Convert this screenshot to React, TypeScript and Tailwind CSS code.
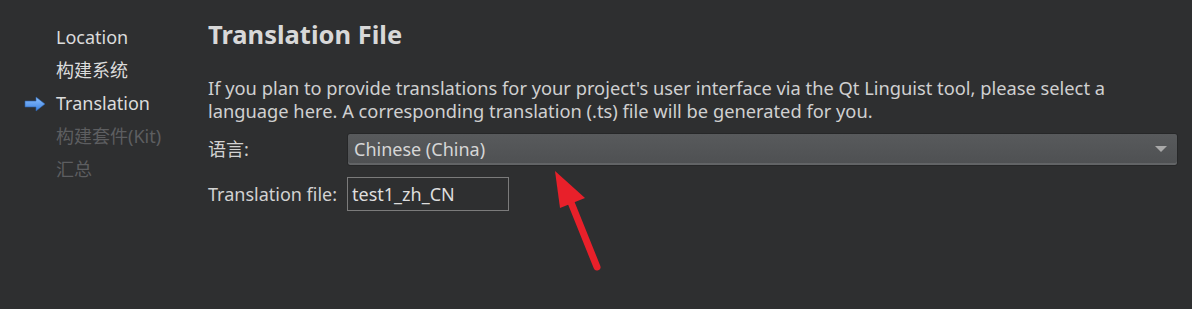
import React from "react";

const font = { fontFamily: '"Noto Sans", "Noto Sans CJK SC", sans-serif' };

const steps = [
  { name: "Location", state: "done" },
  { name: "构建系统", state: "done" },
  { name: "Translation", state: "current" },
  { name: "构建套件(Kit)", state: "todo" },
  { name: "汇总", state: "todo" },
];

function BlueArrow() {
  return (
    <svg width="22" height="16" viewBox="0 0 22 16">
      <defs>
        <linearGradient id="ba" x1="0" y1="0" x2="0" y2="1">
          <stop offset="0" stopColor="#8cc0ff" />
          <stop offset="1" stopColor="#3d82e0" />
        </linearGradient>
      </defs>
      <path d="M1 5 H12 V1 L21 8 L12 15 V11 H1 Z" fill="url(#ba)" stroke="#2a5fa8" strokeWidth="0.6" />
    </svg>
  );
}

export default function App() {
  return (
    <div className="w-[1192px] h-[309px] bg-[#2e2f30] flex text-[18px] text-[#d2d2d2] relative overflow-hidden" style={font}>
      <div className="w-[208px] pt-[21px] flex flex-col">
        {steps.map((s) => (
          <div key={s.name} className="h-[33px] flex items-center">
            <div className="w-[56px] flex justify-end pr-[10px]">{s.state === "current" && <BlueArrow />}</div>
            <span className={s.state === "todo" ? "text-[#5d5e60]" : "text-[#dcdcdc]"}>{s.name}</span>
          </div>
        ))}
      </div>

      <div className="flex-1 pr-[14px] pt-[16px]">
        <h1 className="text-[25.5px] font-bold text-[#d8d8d8] leading-[37px]">Translation File</h1>
        <p className="mt-[23px] leading-[23px] text-[18.3px] text-[#d0d0d0] whitespace-nowrap">
          If you plan to provide translations for your project's user interface via the Qt Linguist tool, please select a
          <br />
          language here. A corresponding translation (.ts) file will be generated for you.
        </p>
        <div className="mt-[11px] flex items-center h-[33px]">
          <span className="w-[139px]">语言:</span>
          <div className="flex-1 h-[33px] rounded-[3px] border border-[#262728] bg-gradient-to-b from-[#585a5c] to-[#4e5052] flex items-center justify-between px-[6px] shadow-[inset_0_-2px_0_#626466]">
            <span className="text-[#d6d6d6]">Chinese (China)</span>
            <svg width="12" height="8" viewBox="0 0 12 8" className="mr-[4px]">
              <path d="M0 0 H12 L6 6 Z" fill="#a9a9a9" />
            </svg>
          </div>
        </div>
        <div className="mt-[11px] flex items-center h-[34px]">
          <span className="w-[139px]">Translation file:</span>
          <div className="w-[162px] h-[34px] border border-[#7b7b7b] flex items-center px-[4px] text-[#dedede]">test1_zh_CN</div>
        </div>
      </div>

      <svg className="absolute left-[540px] top-[160px]" width="80" height="120" viewBox="0 0 80 120">
        <line x1="57" y1="107" x2="26" y2="30" stroke="#e8202a" strokeWidth="7" strokeLinecap="round" />
        <path d="M15 11 L45 38 L20 48 Z" fill="#e8202a" />
      </svg>
    </div>
  );
}
